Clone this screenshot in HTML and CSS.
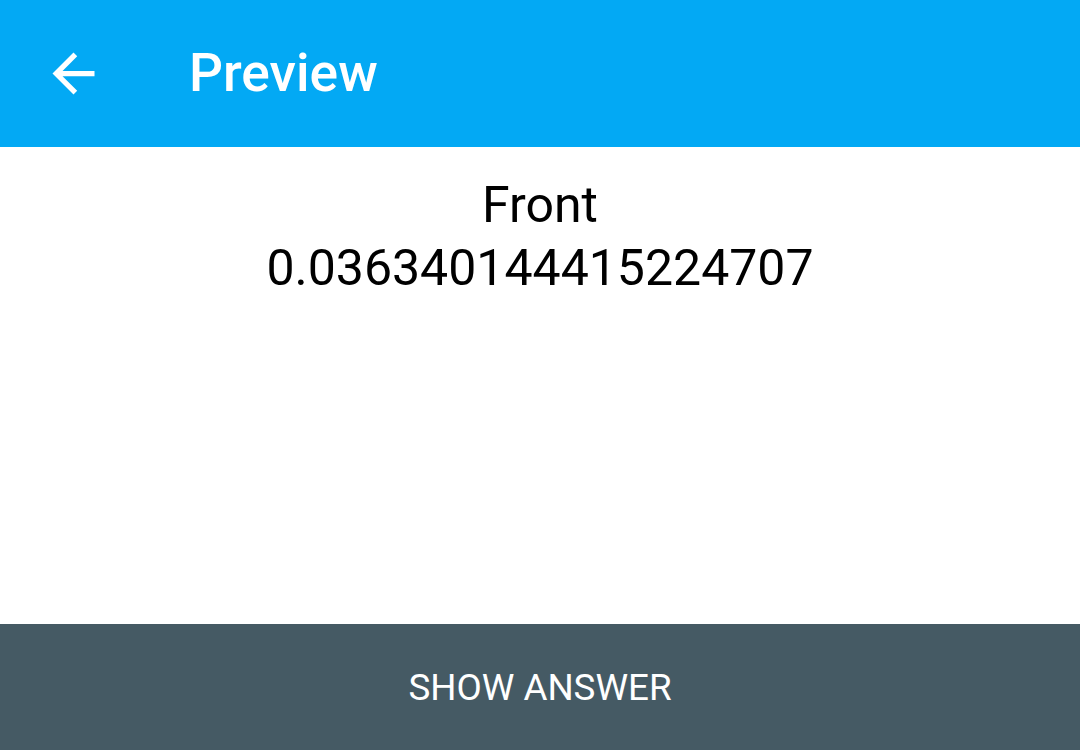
FILE: index.html
```html
<!DOCTYPE html>
<html>
<head>
<meta charset="utf-8">
<link rel="stylesheet" href="styles.css">
</head>
<body>
<div class="app">
  <header class="toolbar">
    <button class="nav-btn" aria-label="Back">
      <svg viewBox="0 0 24 24" width="63" height="63"><path fill="#fff" d="M20 11H7.83l5.59-5.59L12 4l-8 8 8 8 1.41-1.41L7.83 13H20v-2z"/></svg>
    </button>
    <h1 class="title">Preview</h1>
  </header>
  <main class="card">
    <div class="line">Front</div>
    <div class="line">0.036340144415224707</div>
  </main>
  <footer class="answer-bar">SHOW ANSWER</footer>
</div>
</body>
</html>
```
FILE: styles.css
```css
html, body {
  margin: 0;
  padding: 0;
  height: 100%;
}
body {
  font-family: Roboto, "Noto Sans", sans-serif;
  background: #fff;
}
.app {
  display: flex;
  flex-direction: column;
  height: 750px;
}
.toolbar {
  height: 147px;
  flex: none;
  background: #03A9F4;
  display: flex;
  align-items: center;
  padding-left: 42px;
  box-sizing: border-box;
}
.nav-btn {
  border: 0;
  background: none;
  padding: 0;
  width: 63px;
  height: 63px;
  display: flex;
}
.title {
  margin: 0 0 0 84px;
  color: #fff;
  font-size: 53.3px;
  font-weight: 500;
  line-height: 1;
}
.card {
  flex: 1;
  padding-top: 27px;
  text-align: center;
  color: #000;
  font-size: 50px;
  line-height: 63px;
}
.answer-bar {
  height: 126px;
  flex: none;
  background: #455A64;
  color: #fff;
  font-size: 36.75px;
  display: flex;
  align-items: center;
  justify-content: center;
}
```
